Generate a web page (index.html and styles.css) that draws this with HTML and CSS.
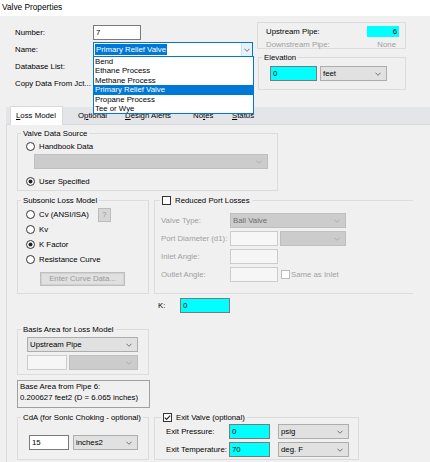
FILE: index.html
```html
<!DOCTYPE html>
<html>
<head>
<meta charset="utf-8">
<title>Valve Properties</title>
<link rel="stylesheet" href="styles.css">
</head>
<body>
<div class="titlebar">Valve Properties</div>

<div class="top">
  <div class="form">
    <div class="frow"><span class="flabel">Number:</span><div class="tb num">7</div></div>
    <div class="frow"><span class="flabel">Name:</span>
      <div class="namecombo"><span class="seltext">Primary Relief Valve</span>
        <span class="dropbtn"><svg class="chev" viewBox="0 0 7 4"><path d="M0.5 0.5L3.5 3.5L6.5 0.5"/></svg></span>
      </div>
    </div>
    <div class="frow"><span class="flabel">Database List:</span></div>
    <div class="frow"><span class="flabel">Copy Data From Jct...</span></div>
  </div>

  <div class="rightcol">
    <div class="group upg">
      <div class="uprow"><span>Upstream Pipe:</span><span class="cyanlbl">6</span></div>
      <div class="uprow dis"><span>Downstream Pipe:</span><span class="none">None</span></div>
    </div>
    <div class="group elev">
      <div class="gtitle">Elevation</div>
      <div class="elevrow">
        <div class="tb cyan w47">0</div>
        <div class="combo w67"><span>feet</span><svg class="chev" viewBox="0 0 7 4"><path d="M0.5 0.5L3.5 3.5L6.5 0.5"/></svg></div>
      </div>
    </div>
  </div>

  <div class="droplist">
    <div class="item">Bend</div>
    <div class="item">Ethane Process</div>
    <div class="item">Methane Process</div>
    <div class="item sel">Primary Relief Valve</div>
    <div class="item">Propane Process</div>
    <div class="item">Tee or Wye</div>
  </div>
</div>

<div class="tabs">
  <div class="tab active"><u>L</u>oss Model</div>
  <div class="tab t1">O<u>p</u>tional</div>
  <div class="tab t2"><u>D</u>esign Alerts</div>
  <div class="tab t3">No<u>t</u>es</div>
  <div class="tab t4"><u>S</u>tatus</div>
</div>

<div class="page">
  <div class="group vds">
    <div class="gtitle">Valve Data Source</div>
    <div class="radio r-hb"><svg viewBox="0 0 9 9"><circle cx="4.5" cy="4.5" r="4" class="ring"/></svg><span>Handbook Data</span></div>
    <div class="combo off vdscombo"><span></span><svg class="chev" viewBox="0 0 7 4"><path d="M0.5 0.5L3.5 3.5L6.5 0.5"/></svg></div>
    <div class="radio r-us"><svg viewBox="0 0 9 9"><circle cx="4.5" cy="4.5" r="4" class="ring"/><circle cx="4.5" cy="4.5" r="2" class="dot"/></svg><span>User Specified</span></div>
  </div>

  <div class="cols">
    <div class="lcol">
      <div class="group subs">
        <div class="gtitle">Subsonic Loss Model</div>
        <div class="radio r15 first"><svg viewBox="0 0 9 9"><circle cx="4.5" cy="4.5" r="4" class="ring"/></svg><span class="cvlbl">Cv (ANSI/ISA)</span><span class="qbtn">?</span></div>
        <div class="radio r15"><svg viewBox="0 0 9 9"><circle cx="4.5" cy="4.5" r="4" class="ring"/></svg><span>Kv</span></div>
        <div class="radio r15"><svg viewBox="0 0 9 9"><circle cx="4.5" cy="4.5" r="4" class="ring"/><circle cx="4.5" cy="4.5" r="2" class="dot"/></svg><span>K Factor</span></div>
        <div class="radio r15"><svg viewBox="0 0 9 9"><circle cx="4.5" cy="4.5" r="4" class="ring"/></svg><span>Resistance Curve</span></div>
        <div class="btn off curvebtn">Enter Curve Data...</div>
      </div>

      <div class="group basis">
        <div class="gtitle">Basis Area for Loss Model</div>
        <div class="combo basiscombo"><span>Upstream Pipe</span><svg class="chev" viewBox="0 0 7 4"><path d="M0.5 0.5L3.5 3.5L6.5 0.5"/></svg></div>
        <div class="basisrow">
          <div class="tb offtb w40"></div>
          <div class="combo off w69"><span></span><svg class="chev" viewBox="0 0 7 4"><path d="M0.5 0.5L3.5 3.5L6.5 0.5"/></svg></div>
        </div>
      </div>

      <div class="basebox">
        <div>Base Area from Pipe 6:</div>
        <div>0.200627 feet2 (D = 6.065 inches)</div>
      </div>

      <div class="group cda">
        <div class="gtitle">CdA (for Sonic Choking - optional)</div>
        <div class="cdarow">
          <div class="tb w40">15</div>
          <div class="combo w65"><span>inches2</span><svg class="chev" viewBox="0 0 7 4"><path d="M0.5 0.5L3.5 3.5L6.5 0.5"/></svg></div>
        </div>
      </div>
    </div>

    <div class="rcol">
      <div class="group rport">
        <div class="ctitle rp-title"><svg class="cb" viewBox="0 0 9 9"><rect x="0.5" y="0.5" width="8" height="8" class="box"/></svg><span>Reduced Port Losses</span></div>
        <div class="prow first"><span class="plabel">Valve Type:</span><div class="combo off w116"><span>Ball Valve</span><svg class="chev" viewBox="0 0 7 4"><path d="M0.5 0.5L3.5 3.5L6.5 0.5"/></svg></div></div>
        <div class="prow"><span class="plabel">Port Diameter (d1):</span><div class="tb offtb w48"></div><div class="combo off w66 ml2"><span></span><svg class="chev" viewBox="0 0 7 4"><path d="M0.5 0.5L3.5 3.5L6.5 0.5"/></svg></div></div>
        <div class="prow"><span class="plabel">Inlet Angle:</span><div class="tb offtb w48"></div></div>
        <div class="prow"><span class="plabel">Outlet Angle:</span><div class="tb offtb w48"></div><svg class="cb offcb" viewBox="0 0 9 9"><rect x="0.5" y="0.5" width="8" height="8" class="box"/></svg><span class="sameas">Same as Inlet</span></div>
      </div>

      <div class="krow"><span class="klabel">K:</span><div class="tb cyan w50">0</div></div>

      <div class="group exitg">
        <div class="ctitle ex-title"><svg class="cb" viewBox="0 0 9 9"><rect x="0.5" y="0.5" width="8" height="8" class="box"/><path d="M1.8 4.6L3.6 6.4L7.2 2.6" class="tick"/></svg><span>Exit Valve (optional)</span></div>
        <div class="erow first"><span class="elabel">Exit Pressure:</span><div class="tb cyan w41">0</div><div class="combo w71"><span>psig</span><svg class="chev" viewBox="0 0 7 4"><path d="M0.5 0.5L3.5 3.5L6.5 0.5"/></svg></div></div>
        <div class="erow"><span class="elabel">Exit Temperature:</span><div class="tb cyan w41">70</div><div class="combo w71"><span>deg. F</span><svg class="chev" viewBox="0 0 7 4"><path d="M0.5 0.5L3.5 3.5L6.5 0.5"/></svg></div></div>
      </div>
    </div>
  </div>
</div>
</body>
</html>
```

FILE: styles.css
```css
* { box-sizing: border-box; }
html, body { margin: 0; padding: 0; }
body {
  width: 430px;
  height: 462px;
  overflow: hidden;
  background: #f0f0f0;
  font-family: "Liberation Sans", Arial, sans-serif;
  font-size: 7.8px;
  color: #000;
}
u { text-decoration: underline; text-underline-offset: 1px; }

.titlebar {
  height: 16px;
  background: #fff;
  padding-left: 2px;
  font-size: 8.3px;
  line-height: 15px;
}

/* top area */
.top { position: relative; height: 91px; display: flex; align-items: flex-start; }
.form { width: 238px; margin-left: 15px; padding-top: 8px; flex: none; }
.frow { height: 17px; display: flex; align-items: center; }
.flabel { width: 78px; flex: none; white-space: nowrap; }

.tb {
  height: 15px;
  border: 1px solid #7a7a7a;
  background: #fff;
  line-height: 13px;
  padding-left: 2px;
  flex: none;
}
.tb.cyan { background: #00ffff; }
.tb.offtb { background: #f6f6f6; border-color: #cccccc; }
.num { width: 48px; }
.w40 { width: 40px; }
.w41 { width: 41px; }
.w47 { width: 47px; }
.w48 { width: 48px; }
.w50 { width: 50px; }
.w65 { width: 65px; }
.w66 { width: 66px; }
.w67 { width: 67px; }
.w69 { width: 69px; }
.w71 { width: 71px; }
.w116 { width: 116px; }
.ml2 { margin-left: 2px; }

.namecombo {
  width: 161px;
  height: 15px;
  border: 1px solid #0078d7;
  background: #fff;
  display: flex;
  align-items: center;
  padding-left: 1px;
}
.seltext { background: #0078d7; color: #fff; line-height: 11px; padding: 0 1px; white-space: nowrap; }
.dropbtn {
  margin-left: auto;
  width: 11px;
  height: 13px;
  background: #e5f1fb;
  border-left: 1px solid #cce4f7;
  display: flex;
  align-items: center;
  justify-content: center;
}

.chev { width: 6px; height: 4px; flex: none; }
.chev path { fill: none; stroke: #606060; stroke-width: 1; }
.off .chev path { stroke: #a8a8a8; }

.combo {
  height: 15px;
  border: 1px solid #adadad;
  background: #e1e1e1;
  display: flex;
  align-items: center;
  justify-content: space-between;
  padding: 0 5px 0 2px;
  flex: none;
  white-space: nowrap;
}
.combo.off { background: #cccccc; border-color: #bfbfbf; color: #6d6d6d; }

.rightcol { margin-left: 4px; margin-top: 6px; display: flex; flex-direction: column; flex: none; }
.group { border: 1px solid #dcdcdc; flex: none; }
.gtitle {
  width: fit-content;
  height: 9px;
  line-height: 9px;
  margin: -5px 0 0 3px;
  padding: 0 2px;
  background: #f0f0f0;
  white-space: nowrap;
}
.upg { width: 149px; height: 27px; padding: 3px 6px 0 8px; }
.uprow { display: flex; justify-content: space-between; align-items: center; height: 11px; white-space: nowrap; }
.uprow + .uprow { margin-top: 2px; height: 10px; }
.cyanlbl { width: 32px; height: 11px; background: #00ffff; text-align: right; padding-right: 2px; line-height: 11px; }
.none { margin-right: 3px; }
.dis { color: #a0a0a0; }
.elev { width: 148px; height: 33px; margin-top: 8px; margin-left: 1px; }
.elevrow { display: flex; gap: 3px; margin: 4px 0 0 11px; }

.droplist {
  position: absolute;
  left: 93px;
  top: 40px;
  width: 161px;
  height: 58.4px;
  background: #fff;
  border: 1px solid #0078d7;
  z-index: 5;
}
.item { height: 9.4px; line-height: 9.4px; padding-left: 1px; white-space: nowrap; }
.item.sel { background: #0078d7; color: #fff; }

/* tabs */
.tabs {
  height: 18px;
  margin-left: 6px;
  background: #e3e5e8;
  border-bottom: 1px solid #d9d9d9;
  display: flex;
  align-items: flex-end;
}
.tab { height: 17px; line-height: 18px; flex: none; white-space: nowrap; }
.tab.active {
  width: 53px;
  height: 19px;
  margin: 0 0 -1px 4px;
  background: #fff;
  border: 1px solid #d9d9d9;
  border-bottom: none;
  padding-left: 5px;
  line-height: 18px;
}
.t1 { margin-left: 15px; width: 47px; }
.t2 { width: 68px; }
.t3 { width: 39px; }
.t4 { width: 40px; }

/* page */
.page {
  margin-left: 6px;
  border-left: 1px solid #d9d9d9;
  padding: 8px 0 0 10px;
  height: 337px;
}
.vds { width: 261px; height: 58px; }
.radio { display: flex; align-items: center; height: 13px; margin-left: 8px; white-space: nowrap; }
.radio svg { width: 9px; height: 9px; margin-right: 4px; flex: none; }
.ring { fill: #fff; stroke: #333; stroke-width: 1; }
.dot { fill: #222; }
.r-hb { margin-top: 2px; }
.vdscombo { width: 234px; margin: 1px 0 0 16px; }
.r-us { margin-top: 6px; }

.cols { display: flex; gap: 5px; margin-top: 9px; align-items: flex-start; }
.lcol { width: 132px; flex: none; display: flex; flex-direction: column; }
.rcol { width: 259px; flex: none; display: flex; flex-direction: column; }

.subs { width: 132px; height: 94px; }
.r15 { height: 15px; }
.r15.first { margin-top: 2px; }
.cvlbl { width: 59px; flex: none; }
.qbtn {
  width: 13px;
  height: 14px;
  border: 1px solid #bcbcbc;
  background: #d6d6d6;
  color: #8c8c8c;
  text-align: center;
  line-height: 12px;
  font-size: 7px;
}
.btn {
  height: 14px;
  text-align: center;
  line-height: 12px;
  white-space: nowrap;
}
.btn.off {
  background: #e0e0e0;
  border: 1px solid #bfbfbf;
  box-shadow: inset 0 0 0 1px #d2d2d2;
  color: #9a9a9a;
}
.curvebtn { width: 85px; margin: 5px 0 0 22px; }

.basis { width: 132px; height: 46px; margin-top: 35px; }
.basiscombo { width: 111px; margin: 3px 0 0 9px; }
.basisrow { display: flex; gap: 2px; margin: 3px 0 0 9px; }

.basebox {
  width: 133px;
  height: 28px;
  margin-top: 5px;
  border: 1px solid #a0a0a0;
  padding: 0 0 0 2px;
  line-height: 11px;
  white-space: nowrap;
}

.cda { width: 132px; height: 43px; margin-top: 9px; }
.cdarow { display: flex; gap: 4px; margin: 13px 0 0 11px; }

.rport { width: 259px; height: 94px; border-right: none; }
.ctitle {
  width: fit-content;
  height: 11px;
  margin: -6px 0 0 5px;
  padding: 0 2px;
  background: #f0f0f0;
  display: flex;
  align-items: center;
  white-space: nowrap;
}
.ex-title { margin-left: 6px; }
.cb { width: 9px; height: 9px; margin-right: 4px; flex: none; }
.box { fill: #fff; stroke: #333; stroke-width: 1; }
.tick { fill: none; stroke: #222; stroke-width: 1.1; }
.offcb { margin: 0 0 0 3px; }
.offcb .box { stroke: #bcbcbc; }
.sameas { margin-left: 1px; color: #a0a0a0; white-space: nowrap; }

.prow { display: flex; align-items: center; height: 15px; margin: 3px 0 0 6px; }
.prow.first { margin-top: 7px; }
.plabel { width: 69px; flex: none; color: #a0a0a0; white-space: nowrap; }

.krow { display: flex; align-items: center; height: 15px; margin: 4px 0 0 4px; }
.klabel { width: 22px; flex: none; }

.exitg { width: 205px; height: 43px; margin-top: 104px; }
.erow { display: flex; align-items: center; height: 15px; margin: 3px 0 0 11px; }
.erow.first { margin-top: 1px; }
.elabel { width: 63px; flex: none; white-space: nowrap; }
.erow .combo { margin-left: 8px; }
```
